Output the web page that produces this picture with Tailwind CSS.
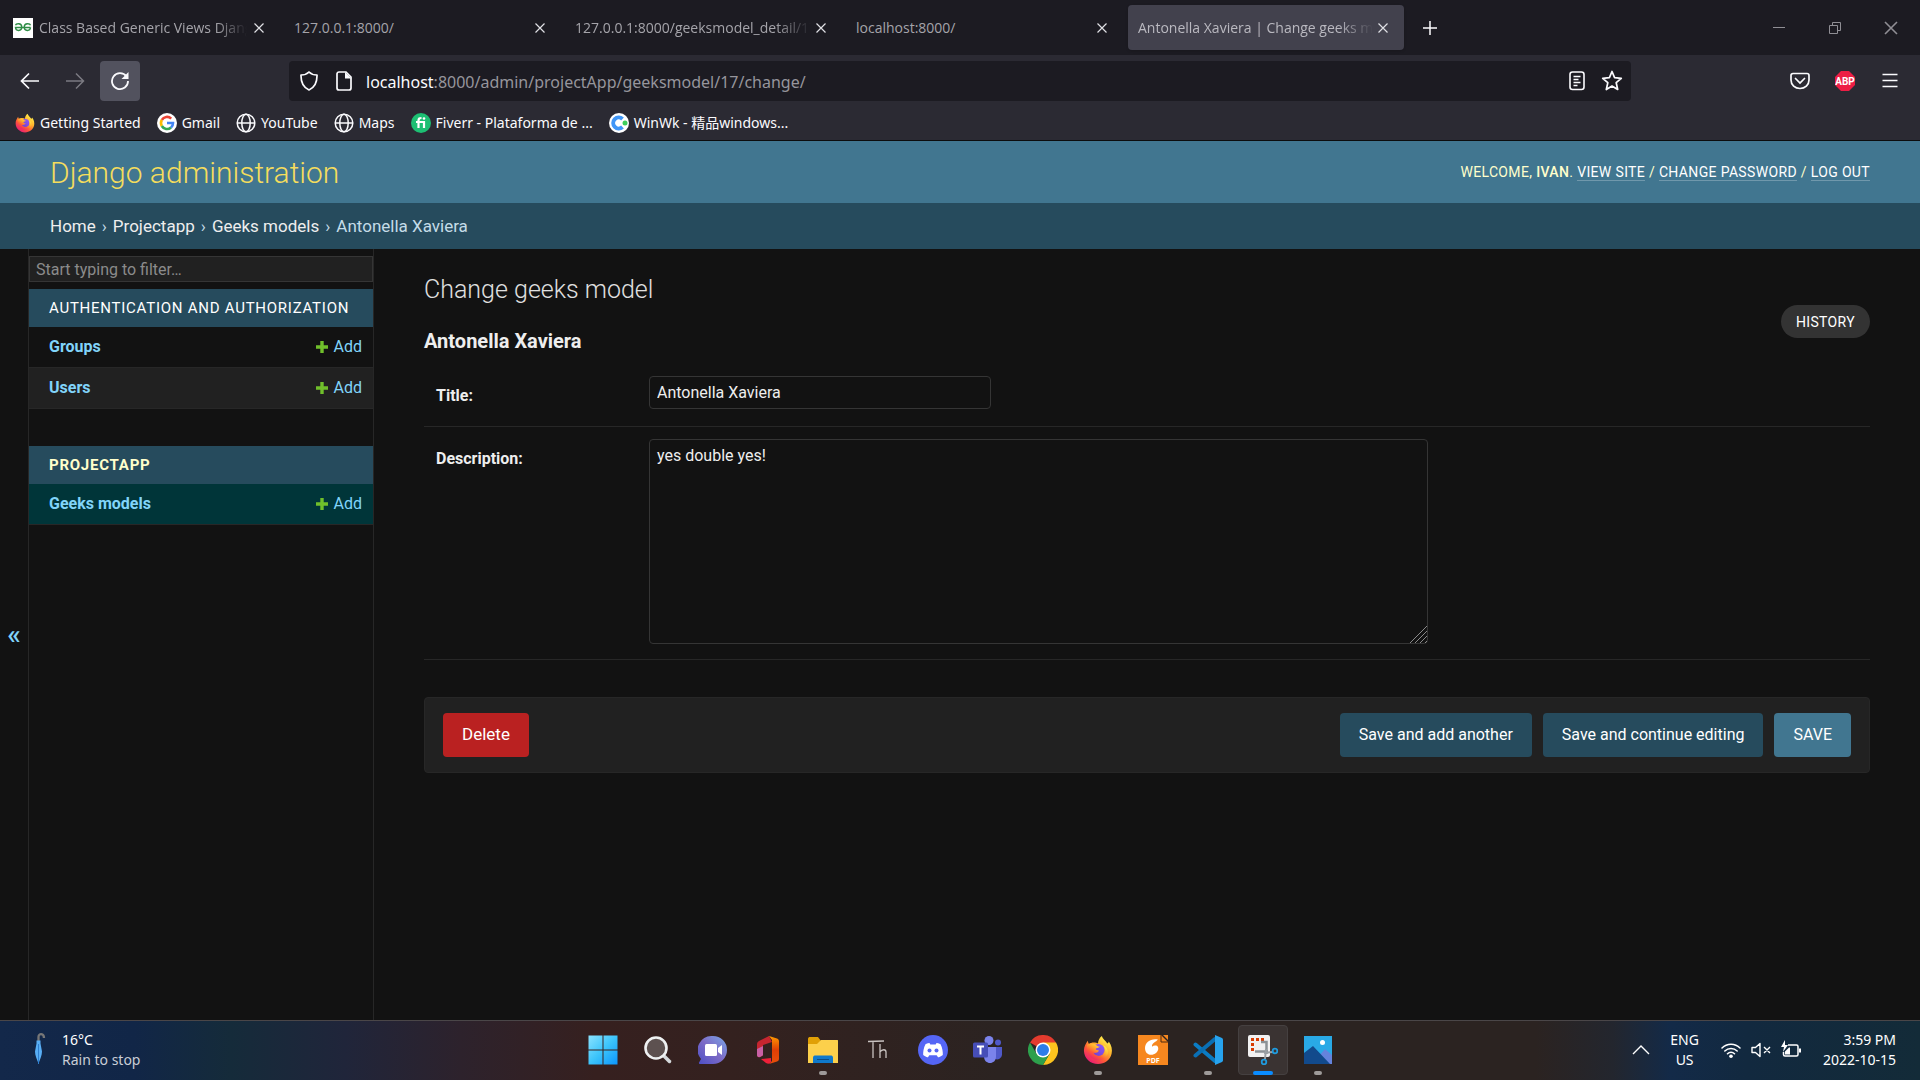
<!DOCTYPE html>
<html lang="en">
<head>
<meta charset="utf-8">
<title>Antonella Xaviera | Change geeks model | Django site admin</title>
<script src="https://cdn.jsdelivr.net/npm/@tailwindcss/browser@4"></script>
</head>
<body class="flex min-h-screen flex-col bg-[#121212] font-['Noto_Sans','Noto_Sans_CJK_SC',sans-serif] text-white">

<!-- shared symbols -->
<svg class="absolute size-0" aria-hidden="true">
  <defs>
    <linearGradient id="fxa" x1="0.850" y1="0.100" x2="0.200" y2="0.950"><stop offset="0" stop-color="#fff44f"/><stop offset="0.350" stop-color="#ffb12c"/><stop offset="0.650" stop-color="#ff5b36"/><stop offset="1" stop-color="#e81878"/></linearGradient>
    <linearGradient id="fxb" x1="1" y1="0" x2="0" y2="1"><stop offset="0" stop-color="#9059ff"/><stop offset="1" stop-color="#6e3fc8"/></linearGradient>
  </defs>
  <symbol id="x" viewBox="0 0 12 12"><path d="M1.500 1.500l9 9M10.500 1.500l-9 9" fill="none" stroke="currentColor" stroke-width="1.200"/></symbol>
  <symbol id="globe" viewBox="0 0 20 20"><g fill="none" stroke="currentColor" stroke-width="1.500"><circle cx="10" cy="10" r="8.800"/><ellipse cx="10" cy="10" rx="4.200" ry="8.800"/><path d="M1.500 10h17"/></g></symbol>
  <symbol id="plus" viewBox="0 0 12 14"><path d="M4.300 1h3.400v4.300H12v3.400H7.700V13H4.300V8.700H0V5.300h4.300z" fill="#70bf2b"/></symbol>
  <symbol id="fox" viewBox="0 0 32 32">
    <path d="M20 1c1 3 4 5 6 8 1-.5 1.500-1 1.500-2 3 4 4 9 3 13-1.500 6.500-7.500 11-14.500 11C8 31 1 25 1 16.500 1 12 3 9 5 6c.5 1.500.5 2.500 1.500 3.500 1-.8 3-1.500 5-1.500 2 0 3 .5 4.500 1 0-3 1.500-6 4-8z" fill="url(#fxa)"/>
    <circle cx="16.500" cy="16" r="6.500" fill="url(#fxb)"/>
    <path d="M4 11c3-3 8-2.500 11 .5 1 .8 2 1 3 1-1.500 1.500-4 1-4.500 2.500 0 1 2 1.500 3.500 1.500-1 2.500-4 3-6 2.500 1.500 3 6 4.500 9.500 2.500 4-2.500 3.500-7.500 1-10.500 4 1.500 5.500 5.500 5 9-1 4-5 7-10 7C8.500 27 3 20 4 11z" fill="url(#fxa)"/>
  </symbol>
</svg>

<!-- tab strip -->
<div class="flex h-[55px] items-center bg-[#1c1b22] pl-1 font-['Open_Sans',sans-serif] text-sm text-[#a5a4aa]">
  <div class="flex items-center gap-1.5" role="tablist">
    <div role="tab" class="flex h-[45px] w-[275px] items-center gap-1.5 px-[9px]">
      <svg class="size-5 shrink-0" viewBox="0 0 20 20"><path d="M0 0h20v20H0z" fill="#fff"/><g fill="none" stroke="#2f8d46" stroke-width="1.400"><path d="M2.500 7.200C3 5.500 8.500 4.500 8.800 9c0 4.500-6 4.500-6.300.5h15M17.500 7.200C17 5.500 11.500 4.500 11.200 9c0 4.500 6 4.500 6.300.5"/></g></svg>
      <span class="min-w-0 flex-1 overflow-hidden pt-px whitespace-nowrap [mask-image:linear-gradient(to_right,black_85%,transparent)]">Class Based Generic Views Django</span>
      <button aria-label="Close tab" class="text-[#e0e0e5]"><svg class="mr-[5px] size-3"><use href="#x"/></svg></button>
    </div>
    <div role="tab" class="flex h-[45px] w-[275px] items-center gap-1 px-[9px]">
      <span class="min-w-0 flex-1 overflow-hidden pt-px whitespace-nowrap">127.0.0.1:8000/</span>
      <button aria-label="Close tab" class="text-[#e0e0e5]"><svg class="mr-[5px] size-3"><use href="#x"/></svg></button>
    </div>
    <div role="tab" class="flex h-[45px] w-[275px] items-center gap-1 px-[9px]">
      <span class="min-w-0 flex-1 overflow-hidden pt-px whitespace-nowrap [mask-image:linear-gradient(to_right,black_85%,transparent)]">127.0.0.1:8000/geeksmodel_detail/17</span>
      <button aria-label="Close tab" class="text-[#e0e0e5]"><svg class="mr-[5px] size-3"><use href="#x"/></svg></button>
    </div>
    <div role="tab" class="flex h-[45px] w-[275px] items-center gap-1 px-[9px]">
      <span class="min-w-0 flex-1 overflow-hidden pt-px whitespace-nowrap">localhost:8000/</span>
      <button aria-label="Close tab" class="text-[#e0e0e5]"><svg class="mr-[5px] size-3"><use href="#x"/></svg></button>
    </div>
    <div role="tab" aria-selected="true" class="flex h-[45px] w-[276px] items-center gap-1 rounded bg-[#42414d] px-[10px] text-[#bab9c0] shadow">
      <span class="min-w-0 flex-1 overflow-hidden pt-px whitespace-nowrap [mask-image:linear-gradient(to_right,black_85%,transparent)]">Antonella Xaviera | Change geeks model</span>
      <button aria-label="Close tab" class="text-[#e0e0e5]"><svg class="mr-[5px] size-3"><use href="#x"/></svg></button>
    </div>
  </div>
  <button aria-label="New tab" class="ml-[18px] text-[#fbfbfe]"><svg class="size-4" viewBox="0 0 16 16"><path d="M8 1v14M1 8h14" stroke="currentColor" stroke-width="1.500"/></svg></button>
  <div class="ml-auto flex items-center pr-px text-[#8f8e94]">
    <button aria-label="Minimize" class="flex w-14 justify-center"><svg class="size-3.5" viewBox="0 0 14 14"><path d="M1 6.500h12" stroke="currentColor"/></svg></button>
    <button aria-label="Restore" class="flex w-14 justify-center"><svg class="size-3.5" viewBox="0 0 14 14"><path d="M1.500 4.500h8v8h-8zM4.500 4V1.500h8v8H10" fill="none" stroke="currentColor"/></svg></button>
    <button aria-label="Close window" class="flex w-14 justify-center"><svg class="size-4"><use href="#x"/></svg></button>
  </div>
</div>

<!-- navigation bar -->
<div class="flex h-[51px] items-center bg-[#2b2a33] pr-5 pl-[10px] text-[#fbfbfe]">
  <button aria-label="Back" class="flex h-10 w-10 items-center justify-center"><svg class="size-5" viewBox="0 0 20 20"><path d="M19 10H2M9 2.500L1.500 10 9 17.500" fill="none" stroke="currentColor" stroke-width="1.700"/></svg></button>
  <button aria-label="Forward" class="ml-[5px] flex h-10 w-10 items-center justify-center text-[#7b7a82]"><svg class="size-5" viewBox="0 0 20 20"><path d="M1 10h17M11 2.500l7.500 7.500-7.500 7.500" fill="none" stroke="currentColor" stroke-width="1.500"/></svg></button>
  <button aria-label="Reload" class="ml-[5px] flex h-10 w-10 items-center justify-center rounded bg-[#52525e]"><svg class="size-5" viewBox="0 0 20 20"><path d="M16.500 5.500A8 8 0 1 0 18 10" fill="none" stroke="currentColor" stroke-width="1.800"/><path d="M18.500 1v7h-7z" fill="currentColor"/></svg></button>
  <div class="ml-[149px] flex h-10 max-w-[1342px] flex-1 items-center rounded bg-[#1c1b22] pr-2 pl-[10px]">
    <svg class="size-5" viewBox="0 0 20 20"><path d="M10 1c2 2 5 3 8 3 .2 7-2 12.500-8 15C4 16.500 1.800 11 2 4c3 0 6-1 8-3z" fill="none" stroke="currentColor" stroke-width="1.700" stroke-linejoin="round"/></svg>
    <svg class="ml-[15px] size-5" viewBox="0 0 20 20"><path d="M3 3a2 2 0 0 1 2-2h7l5 5v11a2 2 0 0 1-2 2H5a2 2 0 0 1-2-2z" fill="none" stroke="currentColor" stroke-width="1.700"/><path d="M11 1l6.500 6.500H11z" fill="currentColor"/></svg>
    <a href="#" class="ml-3 pt-0.5 text-base text-[#96959c]"><span class="text-[#fbfbfe]">localhost</span>:8000/admin/projectApp/geeksmodel/17/change/</a>
    <button aria-label="Reader view" class="ml-auto"><svg class="size-5" viewBox="0 0 20 20"><rect x="3" y="1" width="14" height="17.500" rx="2.500" fill="none" stroke="currentColor" stroke-width="1.600"/><path d="M6.500 5.500h7M6.500 8.500h5M6.500 11.500h7M6.500 14.500h4" stroke="currentColor" stroke-width="1.400"/></svg></button>
    <button aria-label="Bookmark" class="ml-[14px]"><svg class="size-[22px]" viewBox="0 0 22 22"><path d="M11 1.500l2.600 6.200 6.700.6-5.100 4.400 1.500 6.800L11 16l-5.700 3.500 1.500-6.800-5.100-4.400 6.700-.6z" fill="none" stroke="currentColor" stroke-width="1.700" stroke-linejoin="round"/></svg></button>
  </div>
  <div class="ml-auto flex items-center gap-[25px]">
    <button aria-label="Pocket"><svg class="size-5" viewBox="0 0 20 20"><path d="M3 2.500h14a2 2 0 0 1 2 2V9c0 5-4 8.500-9 8.500S1 14 1 9V4.500a2 2 0 0 1 2-2zM5.500 7.500L10 12l4.500-4.500" fill="none" stroke="currentColor" stroke-width="1.700" stroke-linecap="round"/></svg></button>
    <button aria-label="Adblock Plus"><svg class="size-5" viewBox="0 0 20 20"><path d="M6 0h8l6 6v8l-6 6H6l-6-6V6z" fill="#ed1e45"/><text x="10" y="13.500" text-anchor="middle" font-size="10" font-weight="700" fill="#fff" font-family="Roboto">ABP</text></svg></button>
    <button aria-label="Menu"><svg class="size-5" viewBox="0 0 20 20"><path d="M2.500 3.500h15M2.500 9.500h15M2.500 15.500h15" stroke="currentColor" stroke-width="1.600"/></svg></button>
  </div>
</div>

<!-- bookmarks bar -->
<nav class="flex h-[35px] items-center gap-4 border-b border-[#0c0c0d] bg-[#2b2a33] pl-[15px] text-sm whitespace-nowrap text-[#fbfbfe]">
  <a href="#" class="flex items-center gap-[5px]"><svg class="size-5"><use href="#fox"/></svg>Getting Started</a>
  <a href="#" class="flex items-center gap-[5px]"><svg class="size-5" viewBox="0 0 20 20"><circle cx="10" cy="10" r="10" fill="#fff"/><g fill="none" stroke-width="2.600"><path d="M14.200 5.600A6 6 0 0 0 4.800 7" stroke="#ea4335"/><path d="M4.800 7a6 6 0 0 0 0 6" stroke="#fbbc05"/><path d="M4.800 13a6 6 0 0 0 9.200 1.500" stroke="#34a853"/><path d="M14 14.500A6 6 0 0 0 16 10h-6" stroke="#4285f4"/></g></svg>Gmail</a>
  <a href="#" class="flex items-center gap-[5px]"><svg class="size-5"><use href="#globe"/></svg>YouTube</a>
  <a href="#" class="flex items-center gap-[5px]"><svg class="size-5"><use href="#globe"/></svg>Maps</a>
  <a href="#" class="flex items-center gap-[5px]"><svg class="size-5" viewBox="0 0 20 20"><circle cx="10" cy="10" r="10" fill="#1dbf73"/><path d="M5 9h8v6M7.500 15V7.500c0-2 1-2.500 3-2.500" fill="none" stroke="#fff" stroke-width="2.200"/><circle cx="13" cy="5.500" r="1.300" fill="#fff"/></svg>Fiverr - Plataforma de ...</a>
  <a href="#" class="flex items-center gap-[5px]"><svg class="size-5" viewBox="0 0 20 20"><circle cx="10" cy="10" r="10" fill="#fff"/><path d="M13.500 6A5.500 5.500 0 1 0 13.500 14" fill="none" stroke="#4096f7" stroke-width="4"/><circle cx="16" cy="10" r="2.500" fill="#3ecf5b"/></svg>WinWk - 精品windows...</a>
</nav>

<!-- admin page -->
<div class="flex flex-1 flex-col font-['Roboto',sans-serif] text-base text-[#eeeeee]">
  <header class="flex h-[62px] items-center justify-between bg-[#417690] px-[50px]">
    <a href="#" class="text-[30px] font-light text-[#f5dd5d]">Django administration</a>
    <div class="text-sm tracking-wide text-[#ffffcc] uppercase">Welcome, <strong class="font-medium">Ivan</strong>. <a href="#" class="border-b border-white/25 text-white">View site</a> / <a href="#" class="border-b border-white/25 text-white">Change password</a> / <a href="#" class="border-b border-white/25 text-white">Log out</a></div>
  </header>
  <nav class="flex h-[46px] items-center gap-1.5 bg-[#264b5d] px-[50px] pt-px text-[17px] text-[#c4dce8]"><a href="#" class="text-[#eeeeee]">Home</a> › <a href="#" class="text-[#eeeeee]">Projectapp</a> › <a href="#" class="text-[#eeeeee]">Geeks models</a> › <span>Antonella Xaviera</span></nav>

  <div class="flex flex-1">
    <button aria-label="Toggle navigation" class="flex w-7 items-center justify-center text-[28px] font-medium text-[#81d4fa]"><span>«</span></button>
    <aside class="w-[346px] shrink-0 border-x border-[#272727] pt-[7px]">
      <input type="search" aria-label="Filter navigation items" placeholder="Start typing to filter…" class="block h-[26px] w-full border border-[#353535] bg-[#212121] px-1.5 text-base placeholder-[#8b8b8b]">
      <table class="mt-[7px] w-full">
        <caption class="h-[38px] bg-[#264b5d] px-5 text-left text-[15px] leading-[38px] tracking-wider text-white uppercase"><a href="#">Authentication and Authorization</a></caption>
        <tbody>
          <tr class="h-10 border-b border-[#272727]"><th class="pl-5 text-left font-bold text-[#81d4fa]"><a href="#">Groups</a></th><td class="pr-[11px]"><a href="#" class="flex items-center justify-end gap-1.5 text-[#81d4fa]"><svg class="h-3.5 w-3"><use href="#plus"/></svg>Add</a></td></tr>
          <tr class="h-[41px] border-b border-[#272727] bg-[#212121]"><th class="pl-5 text-left font-bold text-[#81d4fa]"><a href="#">Users</a></th><td class="pr-[11px]"><a href="#" class="flex items-center justify-end gap-1.5 text-[#81d4fa]"><svg class="h-3.5 w-3"><use href="#plus"/></svg>Add</a></td></tr>
        </tbody>
      </table>
      <table class="mt-[37px] w-full">
        <caption class="h-[38px] bg-[#264b5d] px-5 text-left text-[15px] leading-[38px] font-bold tracking-wider text-[#ffffcc] uppercase"><a href="#">Projectapp</a></caption>
        <tbody>
          <tr class="h-[41px] border-b border-[#272727] bg-[#003539]"><th class="pl-5 text-left font-bold text-[#81d4fa]"><a href="#">Geeks models</a></th><td class="pr-[11px]"><a href="#" class="flex items-center justify-end gap-1.5 text-[#81d4fa]"><svg class="h-3.5 w-3"><use href="#plus"/></svg>Add</a></td></tr>
        </tbody>
      </table>
    </aside>

    <main class="min-w-0 flex-1 pt-[26px] pr-[50px] pl-[50px]">
      <h1 class="text-[25px] leading-[30px] font-light text-[#e0e0e0]">Change geeks model</h1>
      <div class="flex items-start justify-between">
        <h2 class="mt-6 text-xl leading-6 font-bold">Antonella Xaviera</h2>
        <a href="#" class="flex h-[33px] items-center rounded-full bg-[#333333] px-[15px] text-sm tracking-wide text-white uppercase">History</a>
      </div>
      <form class="mt-[10px]">
        <div class="flex border-b border-[#272727] px-3 pt-[13px] pb-[17px]">
          <label for="title" class="w-[213px] pt-2 leading-6 font-bold">Title:</label>
          <input id="title" type="text" value="Antonella Xaviera" class="h-[33px] w-[342px] rounded border border-[#353535] bg-[#121212] px-[7px]">
        </div>
        <div class="flex border-b border-[#272727] px-3 pt-3 pb-[15px]">
          <label for="description" class="w-[213px] pt-2 leading-6 font-bold">Description:</label>
          <div class="relative w-[779px]">
            <textarea id="description" class="block h-[205px] w-full resize-none rounded border border-[#353535] bg-[#121212] px-[7px] py-1">yes double yes!</textarea>
            <svg class="absolute right-px bottom-px size-[18px] text-[#8a8a8a]" viewBox="0 0 18 18"><path d="M1 18L18 1M6 18L18 6M11 18l7-7M16 18l2-2" stroke="currentColor" stroke-width="1"/></svg>
          </div>
        </div>
        <div class="mt-[37px] flex items-center gap-[11px] rounded border border-[#272727] bg-[#212121] px-[18px] py-[15px] text-white">
          <a href="#" class="mr-auto flex h-11 items-center rounded bg-[#ba2121] px-[19px] text-[17px]">Delete</a>
          <button type="button" class="h-11 rounded bg-[#264b5d] px-[19px]">Save and add another</button>
          <button type="button" class="h-11 rounded bg-[#264b5d] px-[19px]">Save and continue editing</button>
          <button type="button" class="h-11 rounded bg-[#417690] px-[19px] uppercase">Save</button>
        </div>
      </form>
    </main>
  </div>
</div>

<!-- taskbar -->
<footer class="grid h-[60px] grid-cols-[1fr_auto_1fr] items-center border-t border-[#4a4648] bg-[linear-gradient(to_right,#13284a_0%,#112647_7%,#152b3a_12%,#20253a_18%,#2d222c_24%,#36201f_31%,#34211f_38%,#2b2321_52%,#2b2321_80%,#23262e_84%,#132a48_87%,#12293f_91%,#132b38_100%)] pb-0.5 text-sm">
  <button class="flex items-center gap-4 pl-[31px] text-left">
    <svg class="h-9 w-[15px]" viewBox="0 0 15 36"><path d="M7.500 10V5c0-4 5.500-4 5.500 1" fill="none" stroke="#777" stroke-width="2.300"/><path d="M5.500 8.500h4v3l1.500 8c0 4-2 8-3.500 12C6 27.500 4 23.500 4 19.500l1.500-8z" fill="#58aef5"/><path d="M7.500 12v20" stroke="#2f7fd0"/></svg>
    <span class="leading-5"><span class="block">16°C</span><span class="block text-[#c9cdd6]">Rain to stop</span></span>
  </button>

  <div class="flex h-full items-center">
    <button aria-label="Start" class="flex w-[55px] justify-center"><svg class="size-[30px]" viewBox="0 0 30 30"><defs><linearGradient id="win" x1="0" y1="0" x2="1" y2="1"><stop offset="0" stop-color="#8be3ff"/><stop offset="0.500" stop-color="#3cc4fb"/><stop offset="1" stop-color="#0c95fb"/></linearGradient></defs><path d="M.5.500h14v14H.5zM15.500.500h14v14h-14zM.5 15.500h14v14H.5zM15.500 15.500h14v14h-14z" fill="url(#win)"/></svg></button>
    <button aria-label="Search" class="flex w-[55px] justify-center"><svg class="size-[30px]" viewBox="0 0 30 30"><path d="M20 20l6.500 6.500" stroke="#d5d9dc" stroke-width="3.500" stroke-linecap="round"/><circle cx="13" cy="13" r="10.500" fill="#5d5150" stroke="#eff1f2" stroke-width="2.600"/></svg></button>
    <button aria-label="Chat" class="flex w-[55px] justify-center"><svg class="size-[30px]" viewBox="0 0 30 30"><defs><linearGradient id="chat" x1="1" y1="0" x2="0" y2="1"><stop offset="0" stop-color="#79a7e8"/><stop offset="0.500" stop-color="#7d6bc6"/><stop offset="1" stop-color="#4b4ec5"/></linearGradient></defs><path d="M15 1a14 14 0 1 1 0 28H2c-1 0-1.500-1-.8-1.700L3 24A14 14 0 0 1 15 1z" fill="url(#chat)"/><rect x="7" y="9" width="12" height="12" rx="1.500" fill="#fff"/><path d="M20 13l4-3v10l-4-3z" fill="#fff"/></svg></button>
    <button aria-label="Office" class="flex w-[55px] justify-center"><svg class="size-[30px]" viewBox="0 0 30 30"><defs><linearGradient id="off" x1="0" y1="0" x2="0" y2="1"><stop offset="0" stop-color="#ff9a00"/><stop offset="0.500" stop-color="#e03e05"/><stop offset="1" stop-color="#e8500a"/></linearGradient></defs><path d="M16 1L6 6c-1.500.8-2 2-2 3.500V20c0 2 2 3 4 1.500l2-1.200V10l9-3z" fill="#c5252f"/><path d="M4 14v6c0 2 2 3 4 1.500l2-1.200V11z" fill="#c860a4"/><path d="M16 1l8 2.500c1.500.5 2 1.500 2 3v17c0 1.500-.5 2.500-2 3L16 29l3-3V5z" fill="url(#off)"/><path d="M8 24l10-1v4c-1 2-3 2-5 1z" fill="#ee2039"/></svg></button>
    <button aria-label="File Explorer" class="relative flex h-full w-[55px] items-center justify-center"><svg class="h-[30px] w-8" viewBox="0 0 32 30"><path d="M1 7V4c0-1.500 1-2 2-2h8l3 4v4H1z" fill="#e0a006"/><path d="M1 9h9l4-4h16c1 0 1 .5 1 1v22H1z" fill="#fcd04b"/><path d="M6 28v-5c0-2 1-2.500 2.500-2.500h15c1.500 0 2.500.5 2.500 2.500v5z" fill="#0f79cb"/><path d="M10 24.500h12" stroke="#0a4c86"/></svg><span class="absolute bottom-[3px] h-1 w-2 rounded-full bg-[#9e9a99]"></span></button>
    <button aria-label="Thonny" class="flex w-[55px] justify-center"><svg class="size-[30px] text-[#c9c3c1]" viewBox="0 0 30 30"><path d="M5 6.500l16-.5M10 6.500V23M17 9v14M17 17c2-3 6-3 6 0v6" fill="none" stroke="currentColor" stroke-width="1.300"/></svg></button>
    <button aria-label="Discord" class="flex w-[55px] justify-center"><svg class="size-[30px]" viewBox="0 0 30 30"><circle cx="15" cy="15" r="15" fill="#5566f5"/><path d="M11.500 8C9 8.300 7.500 9.200 7.500 9.200 5.500 13 5 17 5.200 20c2 1.800 4 2.300 4.800 2.300l1.300-2h7.400l1.300 2c.8 0 2.800-.5 4.800-2.300.2-3-.3-7-2.300-10.800 0 0-1.500-.9-4-1.200l-.8 1.500h-5.400z" fill="#fff"/><circle cx="11.500" cy="15.500" r="2" fill="#5566f5"/><circle cx="18.500" cy="15.500" r="2" fill="#5566f5"/></svg></button>
    <button aria-label="Teams" class="flex w-[55px] justify-center"><svg class="size-[30px]" viewBox="0 0 30 30"><circle cx="16" cy="5.500" r="4.500" fill="#7b83eb"/><circle cx="25" cy="7.500" r="3" fill="#5059c9"/><path d="M21 12h8v8a5 5 0 0 1-7 4z" fill="#5059c9"/><path d="M11 12h12v9c0 5-3 7-6 7s-6-2-6-7z" fill="#7b83eb"/><rect x="0" y="7.500" width="15" height="15" rx="1.500" fill="#464eb8"/><path d="M4 11.500h7M7.500 11.500v8" stroke="#fff" stroke-width="2"/></svg></button>
    <button aria-label="Chrome" class="flex w-[55px] justify-center"><svg class="size-[30px]" viewBox="0 0 30 30"><path d="M15 15L2 7.500A15 15 0 0 1 28 7.500z" fill="#e33b2e"/><path d="M15 7.500h13a15 15 0 0 1-13 22.500l6.500-11z" fill="#fcc31e"/><path d="M2 7.500A15 15 0 0 0 15 30l6.500-11.300L15 15l-6.500 3.700z" fill="#2da04c"/><circle cx="15" cy="15" r="7.500" fill="#fff"/><circle cx="15" cy="15" r="6" fill="#2b7de9"/></svg></button>
    <button aria-label="Firefox" class="relative flex h-full w-[55px] items-center justify-center"><svg class="size-[30px]"><use href="#fox"/></svg><span class="absolute bottom-[3px] h-1 w-2 rounded-full bg-[#9e9a99]"></span></button>
    <button aria-label="Foxit PDF" class="flex w-[55px] justify-center"><svg class="size-[30px]" viewBox="0 0 30 30"><path d="M0 0h23l7 7v23H0zM25 0h5v5z" fill="#f6871f"/><path d="M23 0v7h7" fill="none" stroke="#4d2a10"/><path d="M20 4.500C13 3 7 7 7 13c0 7 7 8.500 11 5 3-2.500 3-7 0-7.500-3-.5-5 1.500-5 4 3 1 4-1 4-2.500-2 1-3 0-3-1 0-3 4-4 6-6.500z" fill="#fff"/><text x="15" y="28" text-anchor="middle" font-size="7" font-weight="700" fill="#fff" font-family="Open Sans">PDF</text></svg></button>
    <button aria-label="Visual Studio Code" class="relative flex h-full w-[55px] items-center justify-center"><svg class="size-[30px]" viewBox="0 0 30 30"><path d="M2.500 9.500L22 26" stroke="#0b7cc4" stroke-width="4" stroke-linecap="round"/><path d="M2.500 20.500L22 4" stroke="#0a6fb4" stroke-width="4" stroke-linecap="round"/><path d="M22 0l7 3c.7.400 1 .8 1 1.500v21c0 .7-.3 1.100-1 1.500l-7 3z" fill="#27a3ee"/></svg><span class="absolute bottom-[3px] h-1 w-2 rounded-full bg-[#9e9a99]"></span></button>
    <button aria-label="Snipping Tool" class="relative flex h-full w-[55px] items-center justify-center"><span class="flex size-[50px] items-center justify-center rounded border border-[#454040] bg-[#3a3332]"><svg class="size-[30px]" viewBox="0 0 30 30"><rect width="22" height="22" rx="2" fill="#f1f1f1"/><path d="M4.500 16V4.500H17" fill="none" stroke="#d83b01" stroke-width="3" stroke-dasharray="3 2"/><path d="M13 7h5.500v12M7 16.500h13" fill="none" stroke="#8c9296" stroke-width="2.500"/><path d="M18 14l-1 10M16 18l9-1" stroke="#9aa0a4" stroke-width="2"/><circle cx="16" cy="27" r="2.300" fill="none" stroke="#1f9bde" stroke-width="1.800"/><circle cx="27" cy="16" r="2.300" fill="none" stroke="#1f9bde" stroke-width="1.800"/></svg></span><span class="absolute bottom-[3px] h-1 w-5 rounded-full bg-[#0a8cff]"></span></button>
    <button aria-label="Photos" class="relative flex h-full w-[55px] items-center justify-center"><svg class="size-7" viewBox="0 0 28 28"><path d="M0 0h28v28H0z" fill="#29a9e6"/><path d="M15 20l6-7 7 6v9H15z" fill="#6483dc"/><path d="M0 17L9 10l17 18H0z" fill="#124a8c"/><circle cx="18.500" cy="6.500" r="2.500" fill="#fff"/></svg><span class="absolute bottom-[3px] h-1 w-2 rounded-full bg-[#9e9a99]"></span></button>
  </div>

  <div class="flex items-center justify-end pr-6">
    <button aria-label="Show hidden icons"><svg class="h-[10px] w-[18px]" viewBox="0 0 18 10"><path d="M1 9l8-8 8 8" fill="none" stroke="currentColor" stroke-width="1.400"/></svg></button>
    <button class="ml-5 text-center leading-5">ENG<br>US</button>
    <div class="ml-[22px] flex items-center gap-[10px]">
      <svg class="size-5" viewBox="0 0 20 20"><g fill="none" stroke="currentColor" stroke-width="1.500" stroke-linecap="round"><path d="M1 8a12.700 12.700 0 0 1 18 0M3.800 11a8.800 8.800 0 0 1 12.400 0M6.500 13.800a5 5 0 0 1 7 0"/></g><circle cx="10" cy="16.300" r="1.800" fill="currentColor"/></svg>
      <svg class="size-5" viewBox="0 0 20 20"><path d="M1 7.500h3.500L9 3.500v13l-4.500-4H1zM13 7l6 6M19 7l-6 6" fill="none" stroke="currentColor" stroke-width="1.400" stroke-linejoin="round"/></svg>
      <svg class="size-5" viewBox="0 0 20 20"><path d="M7 5h8.500c1 0 1.500.5 1.500 1.500v8c0 1-.5 1.500-1.500 1.500H4c-1 0-1.500-.5-1.500-1.500V12" fill="none" stroke="currentColor" stroke-width="1.500"/><path d="M18 8.500h2v4h-2zM4 14.500v-3l4-4h1v7zM4 0L0 7h3l-1 5 5-7H4z" fill="currentColor"/></svg>
    </div>
    <button class="ml-[22px] text-right leading-5">3:59 PM<br>2022-10-15</button>
  </div>
</footer>
</body>
</html>
